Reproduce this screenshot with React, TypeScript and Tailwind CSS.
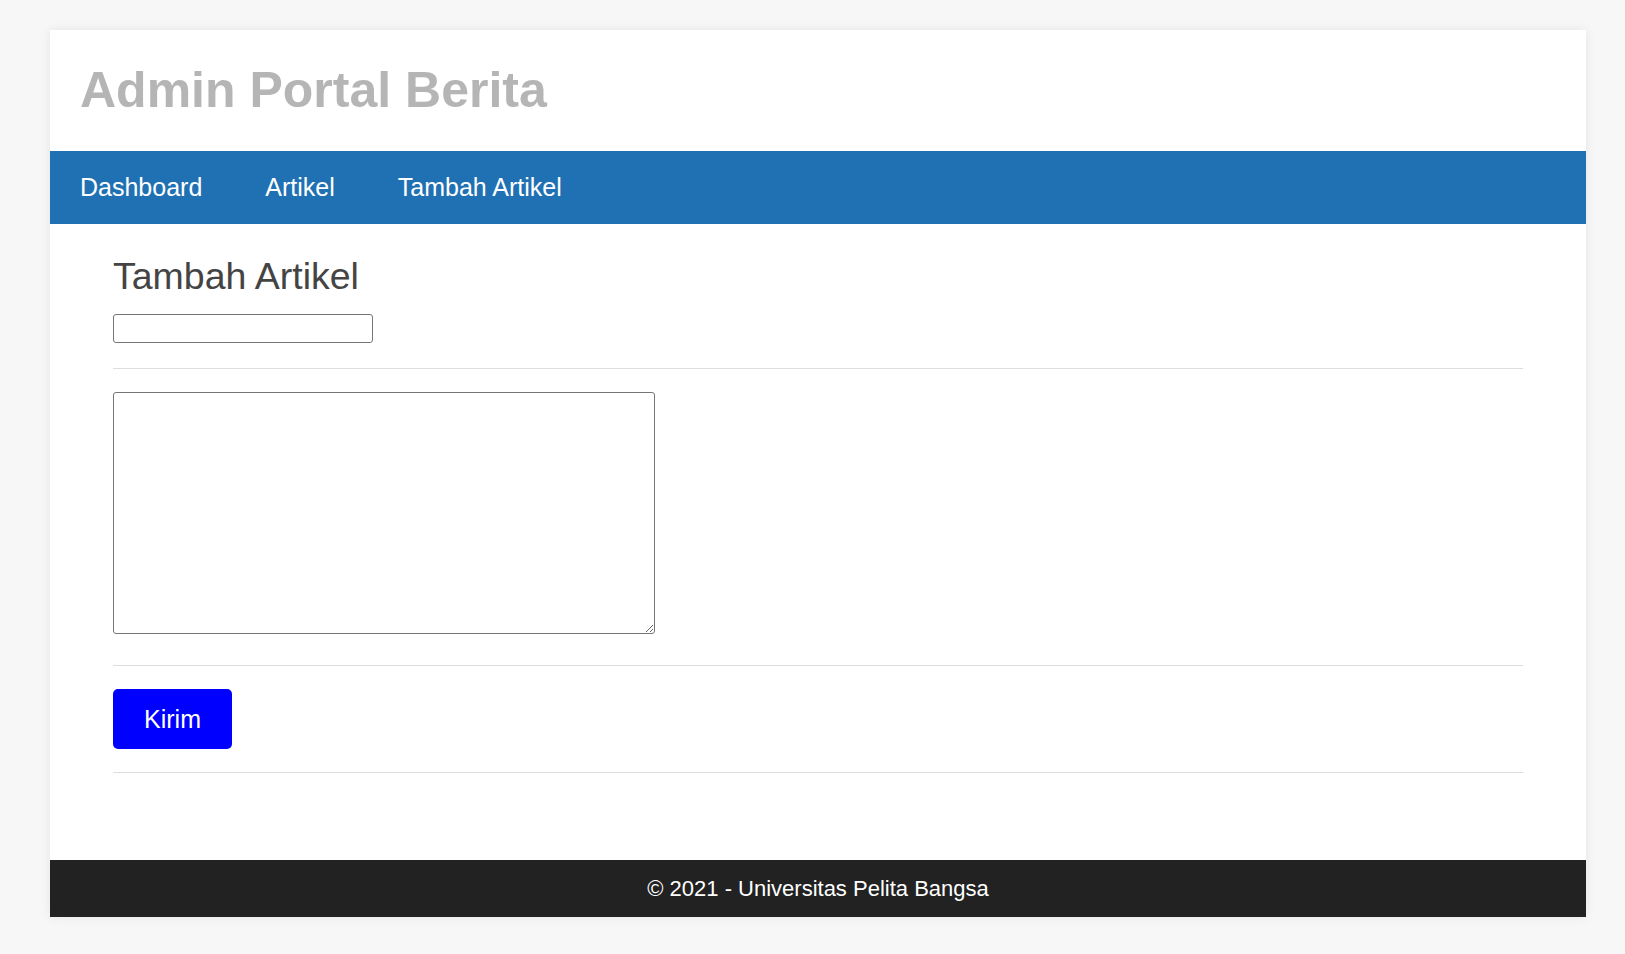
export default function App() {
  return (
    <div className="min-h-[954px] bg-[#f7f7f7] pt-[30px] font-['Liberation_Sans',Arial,sans-serif]">
      <div className="ml-[50px] w-[1536px] bg-white shadow-[0_0_10px_rgba(0,0,0,0.08)]">
        <header className="h-[121px] pl-[30px] pt-[33px]">
          <h1 className="text-[50px] font-bold leading-[55px] text-[#b5b5b5]">Admin Portal Berita</h1>
        </header>

        <nav className="flex h-[73px] items-center gap-[3px] bg-[#1f71b3]">
          {["Dashboard", "Artikel", "Tambah Artikel"].map((item) => (
            <a key={item} href="#" className="px-[30px] text-[25px] leading-[29px] text-white">
              {item}
            </a>
          ))}
        </nav>

        <main className="px-[63px] pb-[87px] pt-[31px]">
          <h2 className="text-[37.5px] leading-[43px] text-[#444]">Tambah Artikel</h2>
          <input
            type="text"
            className="mt-[16px] block h-[29px] w-[260px] rounded-[3px] border border-[#767676] bg-white px-1"
          />
          <hr className="mt-[25px] border-t border-[#ddd]" />
          <textarea className="mt-[23px] block h-[242px] w-[542px] rounded-[3px] border border-[#767676] bg-white p-1" />
          <hr className="mt-[31px] border-t border-[#ddd]" />
          <button className="mt-[23px] h-[60px] w-[119px] rounded-[5px] bg-[#0000ff] pt-[2px] text-[25px] text-white">
            Kirim
          </button>
          <hr className="mt-[23px] border-t border-[#ddd]" />
        </main>

        <footer className="flex h-[57px] items-center justify-center bg-[#222] text-[22px] text-white">
          © 2021 - Universitas Pelita Bangsa
        </footer>
      </div>
    </div>
  )
}
